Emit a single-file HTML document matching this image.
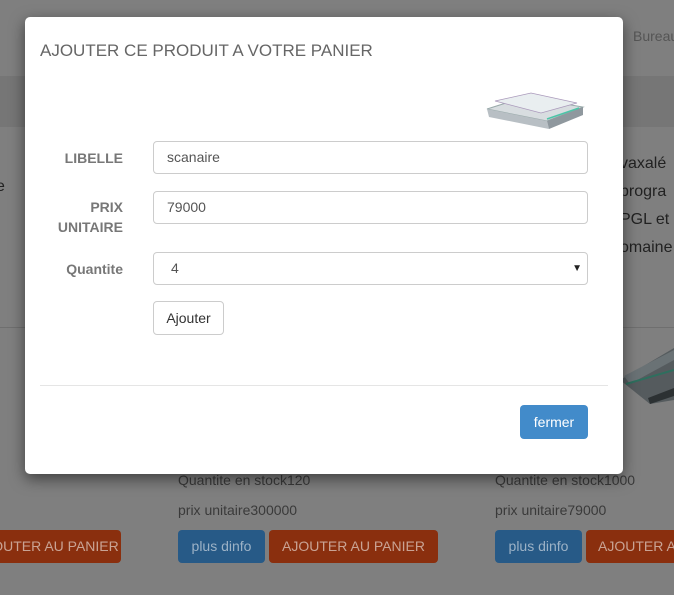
<!DOCTYPE html>
<html><head><style>
html,body{margin:0;width:674px;height:595px;overflow:hidden}
body{background:#7f7f7f;font-family:"Liberation Sans",sans-serif}
#w{position:relative;width:674px;height:595px;overflow:hidden}
.a{position:absolute}
.t{color:#3a3a3a;font-size:14px}
.btn{position:absolute;height:33px;border-radius:4px;font-size:14px;line-height:33px;text-align:center;white-space:nowrap;overflow:hidden}
.or{background:#8a2f0e;color:#c9a394}
.bl{background:#275a87;color:#9cb2c6}
.modal{position:absolute;left:25px;top:17px;width:598px;height:457px;background:#fff;border-radius:5px;box-shadow:0 5px 15px rgba(0,0,0,.5)}
.lbl{position:absolute;font-weight:bold;color:#777;font-size:14px;text-align:right;width:98px;line-height:20px}
.inp{position:absolute;left:128px;width:435px;height:33px;border:1px solid #ccc;border-radius:4px;font-size:14px;color:#555;line-height:31px;padding-left:13px;box-sizing:border-box}
</style></head><body><div id="w">
<div class="a" style="left:0;top:76px;width:674px;height:51px;background:#767676"></div>
<div class="a" style="left:0;top:327px;width:674px;height:1px;background:#6f6f6f"></div>
<div class="a t" style="left:633px;top:28px;width:41px;overflow:hidden;color:#555">Bureau</div>
<div class="a t" style="left:620px;top:150px;width:54px;overflow:hidden;font-size:16px;color:#222;line-height:28px">vaxalé<br>progra<br>PGL et<br>omaine</div>
<div class="a t" style="left:0;top:178px;width:6px;overflow:hidden;color:#222;font-size:16px;text-indent:-4px">e</div>
<svg class="a" style="left:600px;top:340px" width="74" height="100" viewBox="0 0 74 100">
<polygon points="20,40 74,8 74,60 50,64" fill="#555b5e"/>
<polygon points="24,36 74,10 74,20 30,44" fill="#6a7275"/>
<line x1="26" y1="44" x2="74" y2="30" stroke="#2e6f5e" stroke-width="2"/>
<polygon points="50,64 74,56 74,48 48,58" fill="#2c3133"/>
</svg>
<div class="a t" style="left:178px;top:472px">Quantite en stock120</div>
<div class="a t" style="left:178px;top:502px">prix unitaire300000</div>
<div class="a t" style="left:495px;top:472px">Quantite en stock1000</div>
<div class="a t" style="left:495px;top:502px">prix unitaire79000</div>
<div class="btn or" style="left:0;top:530px;width:121px;border-radius:0 4px 4px 0"><span style="margin-left:-10px">OUTER AU PANIER</span></div>
<div class="btn bl" style="left:178px;top:530px;width:87px">plus dinfo</div>
<div class="btn or" style="left:269px;top:530px;width:169px">AJOUTER AU PANIER</div>
<div class="btn bl" style="left:495px;top:530px;width:87px">plus dinfo</div>
<div class="btn or" style="left:586px;top:530px;width:76px;text-align:left;padding-left:12px;border-radius:4px 0 0 4px">AJOUTER AU PANIER</div>

<div class="modal">
<div class="a" style="left:15px;top:24px;font-size:17px;color:#666">AJOUTER CE PRODUIT A VOTRE PANIER</div>
<svg class="a" style="left:460px;top:74px" width="100" height="40" viewBox="0 0 100 40">
<polygon points="2,18 40,6 98,16 62,30" fill="#d8dde0" stroke="#9aa" stroke-width="1"/>
<polygon points="2,18 62,30 64,38 4,26" fill="#b8bfc4"/>
<polygon points="62,30 98,16 98,24 64,38" fill="#8f989e"/>
<polygon points="10,10 46,2 92,12 56,22" fill="#e9eef0" stroke="#a9b" stroke-width=".7"/>
<line x1="62" y1="28" x2="94" y2="17" stroke="#4dc4a8" stroke-width="1.5"/>
</svg>
<div class="lbl" style="left:0;top:131px">LIBELLE</div>
<div class="inp" style="top:124px">scanaire</div>
<div class="lbl" style="left:0;top:180px">PRIX<br>UNITAIRE</div>
<div class="inp" style="top:174px">79000</div>
<div class="lbl" style="left:0;top:242px">Quantite</div>
<div class="inp" style="top:235px;padding-left:17px">4<span style="position:absolute;right:5px;font-size:10px;color:#222">▼</span></div>
<div class="a" style="left:128px;top:284px;width:71px;height:34px;border:1px solid #ccc;border-radius:4px;box-sizing:border-box;text-align:center;line-height:32px;font-size:14px;color:#333">Ajouter</div>
<div class="a" style="left:15px;top:368px;width:568px;height:1px;background:#e5e5e5"></div>
<div class="a" style="left:495px;top:388px;width:68px;height:34px;border-radius:4px;background:#428bca;color:#fff;font-size:14px;text-align:center;line-height:34px">fermer</div>
</div>
</div></body></html>
